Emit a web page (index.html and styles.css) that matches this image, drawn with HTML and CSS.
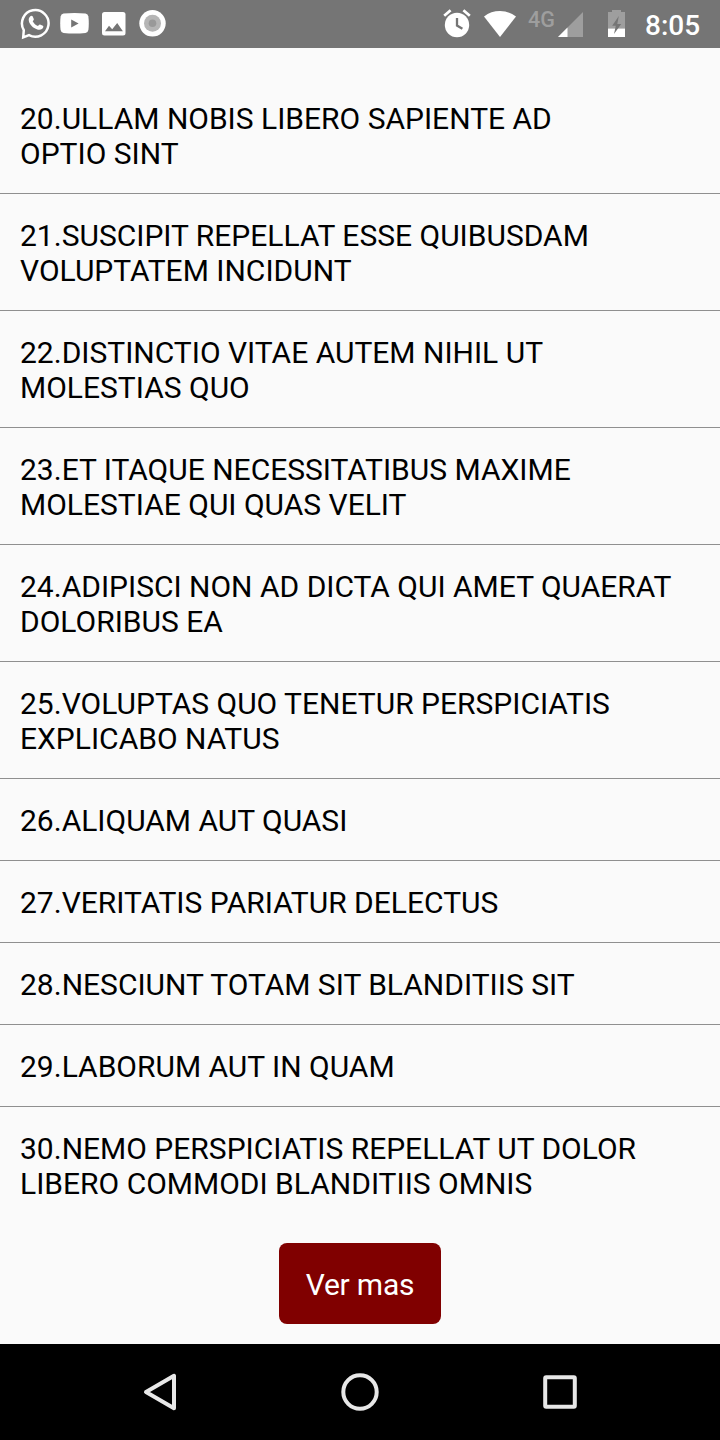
FILE: index.html
```html
<!DOCTYPE html>
<html lang="es">
<head>
<meta charset="utf-8">
<meta name="viewport" content="width=device-width">
<title>Lista</title>
<link rel="stylesheet" href="styles.css">
</head>
<body>
<div class="screen">
  <header class="status">
    <div class="notifications">
      <svg width="32" height="34" viewBox="0 0 32 34"><path d="M3.8 23.1A13.3 13.3 0 1 1 9 28.1L3.2 30.4Z" fill="none" stroke="#fff" stroke-width="2.5"/><path d="M10.3 9.3c.7-.8 1.9-.8 2.3 0l1.2 2.8c.3.8-.6 1.6-1.1 2.2 1.2 2.3 3 3.8 5.3 4.7.7-.7 1.2-1.8 2-1.6l2.9 1.4c1 .6.2 2.2-.6 2.9-1.3 1.1-3.2 1.3-5 .7-4.3-1.3-7.8-4.9-8.5-8.7-.3-1.8.3-3.3 1.5-4.4Z" fill="#fff"/></svg>
      <svg width="29" height="34" viewBox="0 0 29 34"><path d="M3.5 6.6Q14.5 5.6 25.5 6.6Q28 6.9 28.4 9.5Q29.2 16.3 28.4 23Q28 25.6 25.5 25.9Q14.5 26.9 3.5 25.9Q1 25.6.6 23Q-.2 16.3.6 9.5Q1 6.9 3.5 6.6Z" fill="#fff"/><path d="M11.2 12.4v8l7.4-4Z" fill="#757575"/></svg>
      <svg width="24" height="34" viewBox="0 0 24 34"><rect y="5" width="23.5" height="23.5" rx="2.5" fill="#fff"/><path d="M3 24.2 7 18.8l3.2 3.5 5-6.3 5.7 8.2Z" fill="#757575"/></svg>
      <svg width="27" height="34" viewBox="0 0 27 34"><circle cx="13.5" cy="16.3" r="13.2" fill="#fff"/><circle cx="13.5" cy="16.3" r="8.5" fill="#b5b5b5"/><circle cx="13.5" cy="16.3" r="3.8" fill="#999"/></svg>
    </div>
    <div class="system">
      <svg class="alarm" width="28" height="30" viewBox="0 0 28 30"><circle cx="14" cy="16" r="12.2" fill="#fff"/><path d="M1.2 6.7 7.6 1.3M26.8 6.7 20.4 1.3" stroke="#fff" stroke-width="2.8"/><path d="M14 9v7.6l5.4 3.2" fill="none" stroke="#757575" stroke-width="2.3"/></svg>
      <svg class="wifi" width="32" height="30" viewBox="0 0 32 30"><path d="M0 7.4Q7 2 16 2T32 7.4L16 28Z" fill="#fff"/></svg>
      <span class="network">4G</span>
      <svg class="signal" width="25" height="30" viewBox="0 0 25 30"><path d="M25 3v25H0Z" fill="#9e9e9e"/><path d="M9.5 18.5V28H0Z" fill="#fff"/></svg>
      <svg class="battery" width="17" height="30" viewBox="0 0 17 30"><path d="M0 3h4V1h9V3h4v16.5H0Z" fill="#9e9e9e"/><path d="M0 19.5h17V28H0Z" fill="#fff"/><path d="M10.8 7 4.2 16.7h3.6L6 25l7.2-10H9.3Z" fill="#757575"/></svg>
      <span class="clock">8:05</span>
    </div>
  </header>
  <main class="content">
    <ul class="list">
      <li class="item">20.ULLAM NOBIS LIBERO SAPIENTE AD<br>OPTIO SINT</li>
      <li class="item">21.SUSCIPIT REPELLAT ESSE QUIBUSDAM<br>VOLUPTATEM INCIDUNT</li>
      <li class="item">22.DISTINCTIO VITAE AUTEM NIHIL UT<br>MOLESTIAS QUO</li>
      <li class="item">23.ET ITAQUE NECESSITATIBUS MAXIME<br>MOLESTIAE QUI QUAS VELIT</li>
      <li class="item">24.ADIPISCI NON AD DICTA QUI AMET QUAERAT<br>DOLORIBUS EA</li>
      <li class="item">25.VOLUPTAS QUO TENETUR PERSPICIATIS<br>EXPLICABO NATUS</li>
      <li class="item">26.ALIQUAM AUT QUASI</li>
      <li class="item">27.VERITATIS PARIATUR DELECTUS</li>
      <li class="item">28.NESCIUNT TOTAM SIT BLANDITIIS SIT</li>
      <li class="item">29.LABORUM AUT IN QUAM</li>
      <li class="item">30.NEMO PERSPICIATIS REPELLAT UT DOLOR<br>LIBERO COMMODI BLANDITIIS OMNIS</li>
    </ul>
    <button class="more" type="button">Ver mas</button>
  </main>
  <nav class="navbar">
    <svg width="40" height="40" viewBox="0 0 40 40"><path d="M34 3.8v32.4L6 20Z"/></svg>
    <svg width="40" height="40" viewBox="0 0 40 40"><circle cx="20" cy="20" r="16.7"/></svg>
    <svg width="40" height="40" viewBox="0 0 40 40"><rect x="5.2" y="5.2" width="29.6" height="29.6" rx="1"/></svg>
  </nav>
</div>
</body>
</html>
```
FILE: styles.css
```css
body {
  margin: 0;
  font-family: Roboto, sans-serif;
  color: #000;
  background: #fafafa;
}
.screen {
  display: flex;
  flex-direction: column;
  width: 720px;
  height: 1440px;
  overflow: hidden;
}
.status {
  display: flex;
  flex: none;
  justify-content: space-between;
  box-sizing: border-box;
  height: 48px;
  padding: 7px 20px 0;
  background: #757575;
}
.status svg {
  display: block;
  flex: none;
}
.notifications {
  display: flex;
}
.notifications svg + svg {
  margin-left: 8px;
}
.notifications svg:nth-child(3),
.notifications svg:nth-child(4) {
  margin-left: 13px;
}
.system {
  display: flex;
  padding-top: 2px;
}
.wifi {
  margin-left: 13px;
}
.network {
  width: 30px;
  margin-left: 12px;
  font-size: 21.5px;
  font-weight: 500;
  line-height: 21px;
  color: #9e9e9e;
}
.battery {
  margin-left: 25px;
}
.clock {
  width: 55px;
  margin-left: 20px;
  font-size: 28px;
  font-weight: 500;
  line-height: 33px;
  white-space: nowrap;
  color: #fff;
}
.content {
  display: flex;
  flex: 1;
  flex-direction: column;
  align-items: center;
  padding: 29px 0 20px;
}
.list {
  align-self: stretch;
  margin: 0;
  padding: 0;
  list-style: none;
}
.item {
  padding: 24px 20px 22px;
  font-size: 30px;
  line-height: 35px;
  white-space: nowrap;
  border-bottom: 1px solid #8f8f8f;
}
.item:last-child {
  border-bottom: 0;
}
.more {
  width: 162px;
  height: 81px;
  margin-top: 20px;
  padding: 2px 0 0;
  border: 0;
  border-radius: 8px;
  font: 30px/35px Roboto, sans-serif;
  letter-spacing: -0.2px;
  color: #fff;
  background: #800000;
}
.navbar {
  display: flex;
  flex: none;
  align-items: center;
  justify-content: center;
  gap: 160px;
  height: 96px;
  background: #000;
}
.navbar svg {
  fill: none;
  stroke: #e8e8e8;
  stroke-width: 4;
  stroke-linejoin: round;
}
```
